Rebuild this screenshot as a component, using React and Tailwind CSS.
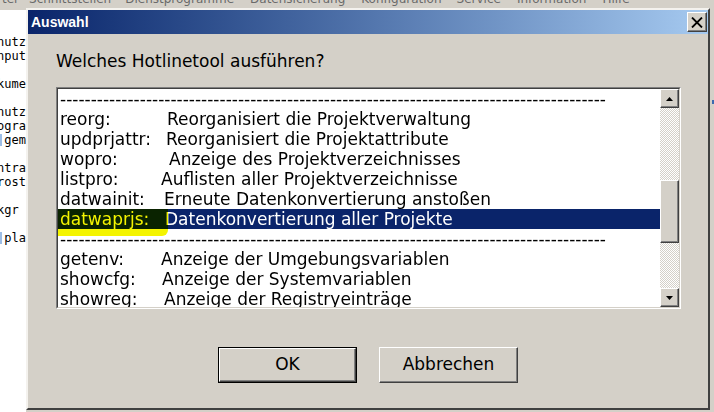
import React from "react";

const menuItems = [
  { label: "ter", cls: "ml-[2px]" },
  { label: "Schnittstellen", cls: "ml-[10px]" },
  { label: "Dienstprogramme", cls: "ml-[14px]" },
  { label: "Datensicherung", cls: "ml-[16px]" },
  { label: "Konfiguration", cls: "ml-[16px]" },
  { label: "Service", cls: "ml-[15px]" },
  { label: "Information", cls: "ml-[16px]" },
  { label: "Hilfe", cls: "ml-[16px]" }
];

// left background window fragments (clipped words)
const bgLines = ["", "nutz", "nput", "", "kume", "", "nutz", "ogra", "gem", "", "ntra", "rost", "", "kgr", "", "pla"];

const rows = [
  { dash: true },
  { cmd: "reorg:", desc: "Reorganisiert die Projektverwaltung", w: "w-[107px]" },
  { cmd: "updprjattr:", desc: "Reorganisiert die Projektattribute", w: "w-[106px]" },
  { cmd: "wopro:", desc: "Anzeige des Projektverzeichnisses", w: "w-[109px]" },
  { cmd: "listpro:", desc: "Auflisten aller Projektverzeichnisse", w: "w-[101px]" },
  { cmd: "datwainit:", desc: "Erneute Datenkonvertierung anstoßen", w: "w-[104px]" },
  { cmd: "datwaprjs:", desc: "Datenkonvertierung aller Projekte", w: "w-[105px]", selected: true },
  { dash: true },
  { cmd: "getenv:", desc: "Anzeige der Umgebungsvariablen", w: "w-[101px]" },
  { cmd: "showcfg:", desc: "Anzeige der Systemvariablen", w: "w-[102px]" },
  { cmd: "showreg:", desc: "Anzeige der Registryeinträge", w: "w-[104px]" }
];

function ScrollArrow({ up }) {
  return (
    <div className="h-[19px] w-[19px] flex items-center justify-center bg-[#d4d0c8] border border-t-white border-l-white border-r-[#404040] border-b-[#404040] shadow-[inset_-1px_-1px_#808080]">
      <svg width="7" height="4" viewBox="0 0 7 4">
        {up ? <polygon points="3.5,0 7,4 0,4" fill="#000" /> : <polygon points="0,0 7,0 3.5,4" fill="#000" />}
      </svg>
    </div>
  );
}

function Checker({ className }) {
  return (
    <div className={"bg-[repeating-conic-gradient(#d4d0c8_0_25%,#ffffff_0_50%)] bg-[length:2px_2px] " + className} />
  );
}

function Scrollbar() {
  return (
    <div className="w-[19px] flex flex-col">
      <ScrollArrow up />
      <Checker className="h-[72px]" />
      <div className="h-[63px] bg-[#d4d0c8] border border-t-white border-l-white border-r-[#404040] border-b-[#404040] shadow-[inset_-1px_-1px_#808080]" />
      <Checker className="flex-1" />
      <ScrollArrow />
    </div>
  );
}

function ListRow({ row }) {
  if (row.dash) {
    return (
      <div className="h-[20px] leading-[20px] pl-[2px] text-black">
        <div className="w-[546px] overflow-hidden whitespace-nowrap">{"-".repeat(100)}</div>
      </div>
    );
  }
  return (
    <div className={"h-[20px] leading-[20px] pl-[2px] flex whitespace-nowrap " + (row.selected ? "bg-[#0a246a] text-white" : "text-black")}>
      <span className={row.w}>{row.cmd}</span>
      <span>{row.desc}</span>
    </div>
  );
}

function Listbox() {
  return (
    <div className="ml-[28px] w-[625px] h-[222px] border border-t-[#808080] border-l-[#808080] border-r-white border-b-white">
      <div className="h-full border border-t-[#404040] border-l-[#404040] border-r-[#d4d0c8] border-b-[#d4d0c8] flex bg-white">
        <div className="relative isolate w-[602px] h-full overflow-hidden bg-white text-[17px]">
          {rows.map((row, i) => (
            <ListRow key={i} row={row} />
          ))}
          {/* yellow marker stroke */}
          <div className="absolute left-0 top-[120px] w-[110px] h-[27px] bg-[#f4f400] mix-blend-multiply rounded-br-[6px]" />
        </div>
        <Scrollbar />
      </div>
    </div>
  );
}

function Button({ children, isDefault }) {
  if (isDefault) {
    return (
      <div className="w-[139px] h-[36px] border border-black">
        <div className="h-full flex items-center justify-center bg-[#d4d0c8] border border-t-white border-l-white border-r-[#404040] border-b-[#404040] shadow-[inset_-1px_-1px_#808080] text-[17px] text-black">
          {children}
        </div>
      </div>
    );
  }
  return (
    <div className="w-[139px] h-[36px] flex items-center justify-center bg-[#d4d0c8] border border-t-white border-l-white border-r-[#404040] border-b-[#404040] shadow-[inset_-1px_-1px_#808080] text-[17px] text-black">
      {children}
    </div>
  );
}

function Dialog() {
  return (
    <div className="w-[684px] h-[402px] bg-[#d4d0c8] border-2 border-t-[#f4f2ee] border-l-[#f4f2ee] border-r-[#404040] border-b-[#404040] flex flex-col">
      <div className="h-[24px] bg-linear-to-r from-[#0a246a] to-[#a6caf0] flex items-center justify-between pl-[3px] pr-[1px]">
        <span className="font-['Liberation_Sans',sans-serif] font-bold text-[14px] text-white">Auswahl</span>
        <div className="w-[20px] h-[20px] flex items-center justify-center bg-[#d4d0c8] border border-t-white border-l-white border-r-[#404040] border-b-[#404040] shadow-[inset_-1px_-1px_#808080]">
          <svg width="12" height="11" viewBox="0 0 12 11">
            <path d="M1 0.5 L11 10.5 M11 0.5 L1 10.5" stroke="#000" strokeWidth="1.8" />
          </svg>
        </div>
      </div>
      <div className="mt-[17px] ml-[28px] text-[17px] leading-[20px] text-black">Welches Hotlinetool ausführen?</div>
      <div className="mt-[16px]">
        <Listbox />
      </div>
      <div className="mt-[38px] flex justify-center gap-[22px]">
        <Button isDefault>OK</Button>
        <Button>Abbrechen</Button>
      </div>
    </div>
  );
}

export default function App() {
  return (
    <div className="w-[714px] h-[412px] bg-[#d4d0c8] overflow-hidden flex flex-col font-['DejaVu_Sans',sans-serif]">
      {/* menu bar of the window behind, mostly covered */}
      <div className="h-[8px] overflow-hidden">
        <div className="-mt-[8px] flex text-[12px] leading-[14px] text-[#6a6a6a] whitespace-nowrap">
          {menuItems.map((m) => (
            <span key={m.label + m.cls} className={m.cls}>{m.label}</span>
          ))}
        </div>
      </div>
      <div className="flex flex-1">
        <div className="w-[26px] mt-[2px] bg-white overflow-hidden pt-[11px] font-['DejaVu_Sans_Mono',monospace] text-[12px] leading-[14px] text-black">
          {bgLines.map((l, i) => (
            <div key={i} className="h-[14px] flex whitespace-nowrap -ml-[3px]">
              {(l === "gem" || l === "pla") && <span className="w-[7px] h-[12px] mt-[1px] mr-[2px] bg-[#9cbde6]" />}
              {l}
            </div>
          ))}
        </div>
        <Dialog />
        <div className="flex-1 relative">
          <div className="absolute right-0 top-[92px] w-[2px] h-[4px] bg-[#3a6ab0]" />
        </div>
      </div>
    </div>
  );
}
